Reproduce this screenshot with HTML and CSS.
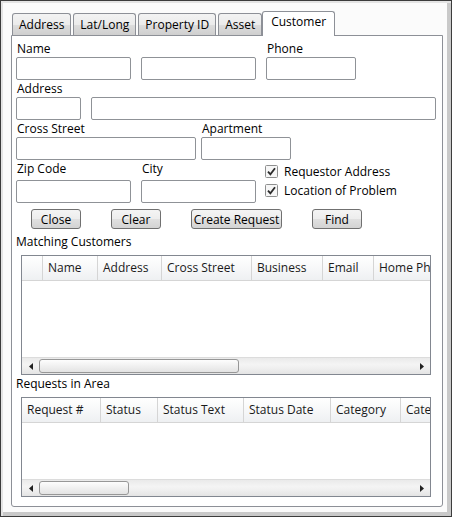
FILE: index.html
```html
<!DOCTYPE html>
<html lang="en">
  <head>
    <meta charset="UTF-8" />
    <title>Customer Search</title>
    <link rel="stylesheet" href="styles.css">
  </head>
  <body>
    <div class="window">
      <div class="tabs">
        <div class="tab">Address</div>
        <div class="tab">Lat/Long</div>
        <div class="tab">Property ID</div>
        <div class="tab">Asset</div>
        <div class="tab selected">Customer</div>
      </div>

      <div class="panel">
        <div class="row">
          <div class="field"><label>Name</label><input class="box w115" type="text"></div>
          <div class="field"><label>&nbsp;</label><input class="box w115" type="text"></div>
          <div class="field"><label>Phone</label><input class="box w90" type="text"></div>
        </div>
        <div class="row next">
          <div class="field"><label>Address</label><input class="box w65" type="text"></div>
          <div class="field"><label>&nbsp;</label><input class="box w345" type="text"></div>
        </div>
        <div class="row next tight">
          <div class="field"><label>Cross Street</label><input class="box w180" type="text"></div>
          <div class="field"><label>Apartment</label><input class="box w90" type="text"></div>
        </div>
        <div class="row next zip">
          <div class="field"><label>Zip Code</label><input class="box w115" type="text"></div>
          <div class="field"><label>City</label><input class="box w115" type="text"></div>
          <div class="checks">
            <div class="check-item">
              <svg class="checkbox" width="13" height="13" viewBox="0 0 13 13">
                <rect x="0.5" y="0.5" width="12" height="12" rx="1" fill="#f6f6f6" stroke="#8e8f8f"/>
                <path d="M3 6.6 L5.4 9.4 L10 3.2" fill="none" stroke="#2b2b2b" stroke-width="1.8"/>
              </svg>
              <span>Requestor Address</span>
            </div>
            <div class="check-item">
              <svg class="checkbox" width="13" height="13" viewBox="0 0 13 13">
                <rect x="0.5" y="0.5" width="12" height="12" rx="1" fill="#f6f6f6" stroke="#8e8f8f"/>
                <path d="M3 6.6 L5.4 9.4 L10 3.2" fill="none" stroke="#2b2b2b" stroke-width="1.8"/>
              </svg>
              <span>Location of Problem</span>
            </div>
          </div>
        </div>

        <div class="buttons">
          <button class="w50">Close</button>
          <button class="w50">Clear</button>
          <button class="w91">Create Request</button>
          <button class="w50">Find</button>
        </div>

        <div class="section-label">Matching Customers</div>
        <div class="grid customers">
          <div class="grid-header">
            <div class="col c21"></div>
            <div class="col c55">Name</div>
            <div class="col c64">Address</div>
            <div class="col c90">Cross Street</div>
            <div class="col c71">Business</div>
            <div class="col c51">Email</div>
            <div class="col c90">Home Phone</div>
          </div>
          <div class="grid-body"></div>
          <div class="hscroll">
            <div class="arrow left"><svg width="4" height="7" viewBox="0 0 4 7"><path d="M4 0 L0 3.5 L4 7z" fill="#222"/></svg></div>
            <div class="track"><div class="thumb t200"></div></div>
            <div class="arrow right"><svg width="4" height="7" viewBox="0 0 4 7"><path d="M0 0 L4 3.5 L0 7z" fill="#222"/></svg></div>
          </div>
        </div>

        <div class="section-label second">Requests in Area</div>
        <div class="grid requests">
          <div class="grid-header">
            <div class="col c79">Request #</div>
            <div class="col c57">Status</div>
            <div class="col c86">Status Text</div>
            <div class="col c87">Status Date</div>
            <div class="col c70">Category</div>
            <div class="col c90">Category Text</div>
          </div>
          <div class="grid-body"></div>
          <div class="hscroll">
            <div class="arrow left"><svg width="4" height="7" viewBox="0 0 4 7"><path d="M4 0 L0 3.5 L4 7z" fill="#222"/></svg></div>
            <div class="track"><div class="thumb t90"></div></div>
            <div class="arrow right"><svg width="4" height="7" viewBox="0 0 4 7"><path d="M0 0 L4 3.5 L0 7z" fill="#222"/></svg></div>
          </div>
        </div>
      </div>
    </div>
  </body>
</html>
```

FILE: styles.css
```css
body {
  margin: 0;
  font-family: "Open Sans", "Noto Sans", sans-serif;
  font-size: 12px;
  color: #000;
}

.window {
  width: 452px;
  height: 517px;
  box-sizing: border-box;
  border: 1px solid #3c3c3c;
  background-color: #fbfbfb;
  box-shadow: inset 2px 2px 0 #e4e4e4, inset -4px -4px 0 #c9c9c9;
  padding: 10px 0 0 10px;
}

/* tabs */
.tabs {
  display: flex;
  align-items: flex-end;
  height: 24px;
  padding-left: 1px;
  gap: 2px;
}

.tab {
  height: 22px;
  box-sizing: border-box;
  line-height: 21px;
  padding: 0 6px;
  border: 1px solid #8d9097;
  border-bottom: none;
  border-radius: 3px 3px 0 0;
  background: linear-gradient(#f3f3f3, #ebebeb 50%, #dddddd 51%, #cfcfcf);
  white-space: nowrap;
}

.tab.selected {
  height: 25px;
  margin-bottom: -1px;
  margin-left: -2px;
  padding: 0 8px;
  line-height: 20px;
  background: #fff;
  position: relative;
  z-index: 1;
}

/* panel */
.panel {
  width: 432px;
  box-sizing: border-box;
  border: 1px solid #8d9097;
  border-radius: 0 0 3px 3px;
  background-color: #fff;
  padding: 5px 0 9px 4px;
}

.row {
  display: flex;
  gap: 10px;
}

.row.next {
  margin-top: 1px;
}

.row.tight {
  gap: 5px;
}

.field {
  display: flex;
  flex-direction: column;
}

.field label {
  line-height: 16px;
  height: 16px;
  padding-left: 1px;
  white-space: nowrap;
}

.row.zip .field label {
  margin-bottom: 3px;
}

.box {
  height: 23px;
  box-sizing: border-box;
  margin: 0;
  border: 1px solid #8f9297;
  border-radius: 2px;
  background: #fff;
  font: inherit;
}

.w65 { width: 65px; }
.w90 { width: 90px; }
.w115 { width: 115px; }
.w180 { width: 180px; }
.w345 { width: 345px; }

.checks {
  margin-left: -1px;
  padding-top: 1px;
}

.check-item {
  display: flex;
  align-items: center;
  height: 19px;
  gap: 6px;
  white-space: nowrap;
}

/* buttons */
.buttons {
  display: flex;
  gap: 30px;
  margin-top: 6px;
  padding-left: 15px;
}

button {
  height: 20px;
  padding: 0;
  font: inherit;
  color: #000;
  border: 1px solid #707070;
  border-radius: 3px;
  background: linear-gradient(#f4f4f4, #ededed 50%, #e0e0e0 51%, #d3d3d3);
}

button.w50 { width: 50px; }
button.w91 { width: 91px; }

.section-label {
  line-height: 16px;
  margin-top: 5px;
}

.section-label.second {
  margin-top: 1px;
}

/* data grids */
.grid {
  width: 410px;
  box-sizing: border-box;
  margin: 5px 0 0 5px;
  border: 1px solid #828790;
  display: flex;
  flex-direction: column;
  background-color: #fff;
}

.grid-header {
  display: flex;
  height: 25px;
  box-sizing: border-box;
  overflow: hidden;
  border-bottom: 1px solid #d5d5d5;
  background: linear-gradient(#ffffff, #f7f8f9 50%, #eef0f2);
}

.col {
  flex: none;
  box-sizing: border-box;
  border-right: 1px solid #d5d5d5;
  padding-left: 5px;
  line-height: 23px;
  white-space: nowrap;
  color: #1a1a1a;
}

.c21 { width: 21px; }
.c51 { width: 51px; }
.c55 { width: 55px; }
.c57 { width: 57px; }
.c64 { width: 64px; }
.c70 { width: 70px; }
.c71 { width: 71px; }
.c79 { width: 79px; }
.c86 { width: 86px; }
.c87 { width: 87px; }
.c90 { width: 90px; }

.customers .grid-body { height: 76px; }
.requests .grid-body { height: 56px; }

.hscroll {
  display: flex;
  height: 16px;
  border-top: 1px solid #dcdcdc;
  background: linear-gradient(#eaeaea, #f4f4f4 40%, #f0f0f0 60%, #e4e4e4);
}

.arrow {
  width: 17px;
  flex: none;
  display: flex;
  align-items: center;
  justify-content: center;
}

.track {
  flex: 1;
  display: flex;
  align-items: center;
}

.thumb {
  height: 14px;
  box-sizing: border-box;
  border: 1px solid #979797;
  border-radius: 3px;
  background: linear-gradient(#fdfdfd, #f0f0f0 50%, #e3e3e3);
}

.t200 { width: 200px; }
.t90 { width: 90px; }
```
